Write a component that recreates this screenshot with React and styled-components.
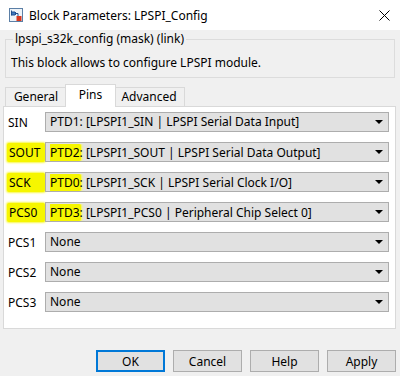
import React from "react";
import styled, { createGlobalStyle } from "styled-components";

const Global = createGlobalStyle`
  html, body {
    margin: 0;
    padding: 0;
    background: #f0f0f0;
  }
  body {
    font-family: "Noto Sans", "Liberation Sans", sans-serif;
    font-size: 12px;
    color: #000;
  }
`;

const Window = styled.div`
  width: 400px;
  height: 376px;
  display: flex;
  flex-direction: column;
  background: #f0f0f0;
  overflow: hidden;
`;

const TitleBar = styled.div`
  height: 30px;
  background: #fff;
  display: flex;
  align-items: center;
  padding: 0 10px 0 9px;
  box-sizing: border-box;
  gap: 6px;
`;

const Title = styled.div`
  flex: 1;
  font-size: 12px;
  line-height: 16px;
  padding-top: 1px;
`;

const Body = styled.div`
  flex: 1;
  display: flex;
  flex-direction: column;
`;

const Group = styled.fieldset`
  margin: 1px 5px 0 5px;
  padding: 8px 5px 6px 5px;
  border: 1px solid #dcdcdc;
  border-radius: 0;
  min-width: 0;
`;

const Legend = styled.legend`
  padding: 0 2px;
  margin-left: 2px;
  line-height: 16px;
`;

const Description = styled.div`
  line-height: 16px;
`;

const TabRow = styled.div`
  display: flex;
  align-items: flex-end;
  margin: 7px 0 0 3px;
  padding-left: 2px;
  height: 22px;
  position: relative;
  z-index: 1;
`;

const Tab = styled.div`
  width: ${(p) => p.$w}px;
  height: ${(p) => (p.$active ? "23px" : "20px")};
  margin: 0 ${(p) => (p.$active ? "-2px" : "0")};
  box-sizing: border-box;
  display: flex;
  align-items: center;
  justify-content: center;
  background: ${(p) => (p.$active ? "#fff" : "#f0f0f0")};
  border: 1px solid #d9d9d9;
  border-bottom: ${(p) => (p.$active ? "none" : "1px solid #d9d9d9")};
  border-left: ${(p) => (p.$first || p.$active ? "1px solid #d9d9d9" : "none")};
  z-index: ${(p) => (p.$active ? 2 : 1)};
  line-height: 16px;
  padding-bottom: ${(p) => (p.$active ? "3px" : "0")};
`;

const Panel = styled.div`
  margin: -1px 4px 0 3px;
  background: #fff;
  border: 1px solid #d9d9d9;
  padding: 5px 6px 16px 0;
  display: grid;
  grid-template-columns: 41px 1fr;
  row-gap: 10px;
  align-items: center;
`;

const LabelCell = styled.div`
  height: 20px;
  display: flex;
  align-items: center;
  padding-left: 4px;
`;

const Label = styled.span`
  display: inline-flex;
  align-items: center;
  height: ${(p) => (p.$hl ? "19px" : "16px")};
  padding: 0 ${(p) => (p.$hl ? "2px" : "0")};
  margin-left: ${(p) => (p.$hl ? "-1px" : "0")};
  width: ${(p) => (p.$hl ? "34px" : "auto")};
  background: ${(p) => (p.$hl ? "#f6f600" : "transparent")};
  box-shadow: ${(p) => (p.$hl ? "0 0 2px 1px #f9f94a" : "none")};
  border-radius: 2px;
`;

const Select = styled.div`
  height: 20px;
  box-sizing: border-box;
  background: #e1e1e1;
  border: 1px solid #adadad;
  display: flex;
  align-items: center;
  padding: 0 5px 0 4px;
`;

const SelectText = styled.div`
  flex: 1;
  white-space: nowrap;
  overflow: hidden;
  line-height: 16px;
`;

const Mark = styled.span`
  display: inline-block;
  background: #f6f600;
  box-shadow: 0 0 2px 1px #f9f94a;
  line-height: 17px;
  padding: 0 1px;
  margin: 0 -1px;
  border-radius: 2px;
`;

const Arrow = styled.span`
  width: 0;
  height: 0;
  border-left: 4px solid transparent;
  border-right: 4px solid transparent;
  border-top: 4px solid #000;
`;

const Buttons = styled.div`
  display: flex;
  justify-content: flex-end;
  gap: 8px;
  margin: 21px 4px 0 0;
`;

const Button = styled.button`
  width: 69px;
  height: 22px;
  box-sizing: border-box;
  background: #e1e1e1;
  border: ${(p) => (p.$primary ? "2px solid #0078d7" : "1px solid #adadad")};
  font-family: inherit;
  font-size: 12px;
  color: #000;
  padding: 0;
`;

const BlockIcon = () => (
  <svg width="14" height="14" viewBox="0 0 14 14">
    <rect x="0.5" y="0.5" width="13" height="13" fill="#eef3f8" stroke="#5b7fa6" />
    <path d="M2.5 2.5 V7.5 M2.5 4 H6 L7.5 5.5 L6 7 H2.5" fill="#3f79c0" stroke="#1f4e8c" />
    <path d="M6 5.5 H9 V8" fill="none" stroke="#1f4e8c" />
    <rect x="7.5" y="8" width="5" height="5" fill="#d9381e" />
  </svg>
);

const CloseIcon = () => (
  <svg width="11" height="11" viewBox="0 0 11 11">
    <path d="M0.5 0.5 L10.5 10.5 M10.5 0.5 L0.5 10.5" stroke="#000" strokeWidth="1" />
  </svg>
);

const rows = [
  { label: "SIN", pin: "PTD1", rest: ": [LPSPI1_SIN | LPSPI Serial Data Input]" },
  { label: "SOUT", pin: "PTD2", rest: ": [LPSPI1_SOUT | LPSPI Serial Data Output]", hl: true },
  { label: "SCK", pin: "PTD0", rest: ": [LPSPI1_SCK | LPSPI Serial Clock I/O]", hl: true },
  { label: "PCS0", pin: "PTD3", rest: ": [LPSPI1_PCS0 | Peripheral Chip Select 0]", hl: true },
  { label: "PCS1", rest: "None" },
  { label: "PCS2", rest: "None" },
  { label: "PCS3", rest: "None" },
];

export default function App() {
  return (
    <Window>
      <Global />
      <TitleBar>
        <BlockIcon />
        <Title>Block Parameters: LPSPI_Config</Title>
        <CloseIcon />
      </TitleBar>
      <Body>
        <Group>
          <Legend>lpspi_s32k_config (mask) (link)</Legend>
          <Description>This block allows to configure LPSPI module.</Description>
        </Group>
        <TabRow>
          <Tab $first $w={62}>General</Tab>
          <Tab $active $w={51}>Pins</Tab>
          <Tab $w={71}>Advanced</Tab>
        </TabRow>
        <Panel>
          {rows.map((r) => (
            <React.Fragment key={r.label}>
              <LabelCell>
                <Label $hl={r.hl}>{r.label}</Label>
              </LabelCell>
              <Select>
                <SelectText>
                  {r.pin && (r.hl ? <Mark>{r.pin}</Mark> : r.pin)}
                  {r.rest}
                </SelectText>
                <Arrow />
              </Select>
            </React.Fragment>
          ))}
        </Panel>
        <Buttons>
          <Button $primary>OK</Button>
          <Button>Cancel</Button>
          <Button>Help</Button>
          <Button>Apply</Button>
        </Buttons>
      </Body>
    </Window>
  );
}
